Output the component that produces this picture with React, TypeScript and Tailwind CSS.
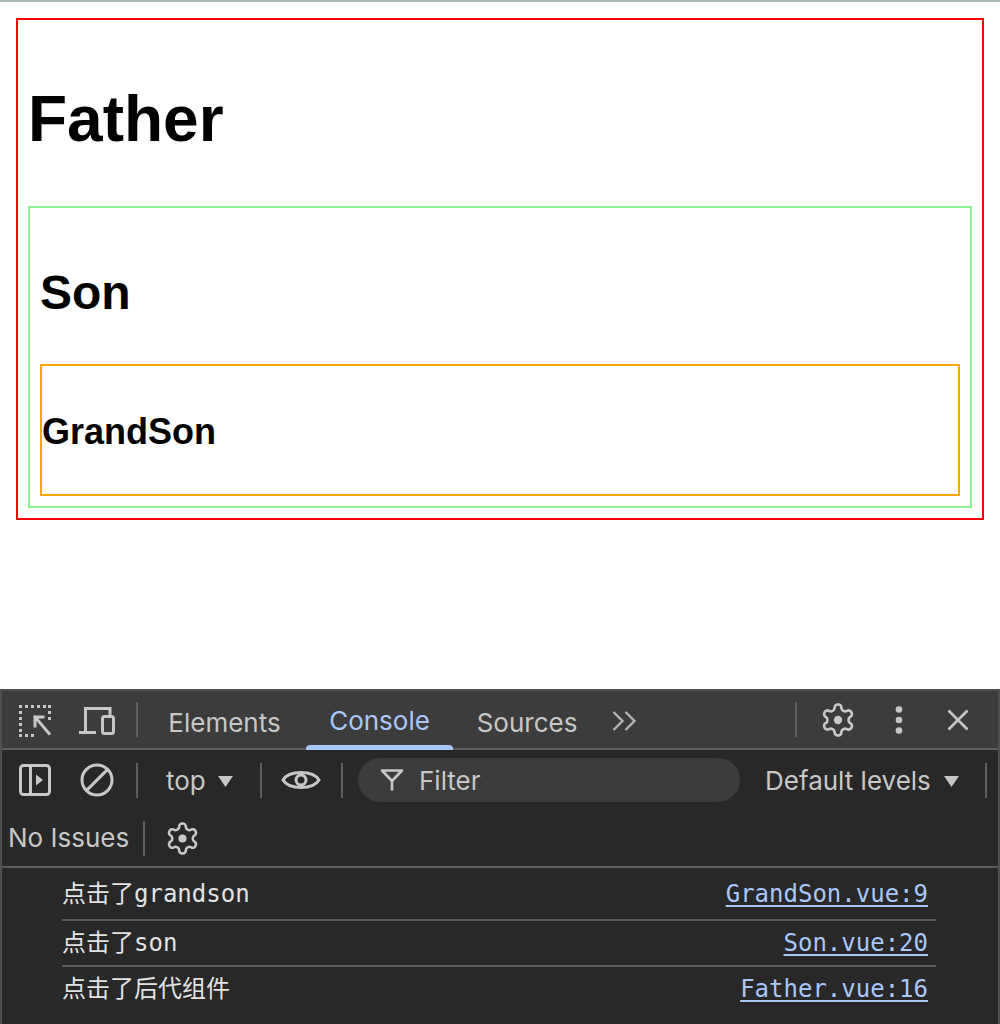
import React from "react";

const ui = "font-['Inter',sans-serif]";
const mono = "font-['DejaVu_Sans_Mono','Noto_Sans_CJK_SC',monospace]";
const C = "#c7c7c7";

function InspectIcon() {
  const dots: [number, number][] = [
    [0, 0], [6, 0], [12, 0], [18, 0], [24, 0], [29, 0],
    [0, 6], [0, 12], [0, 18], [0, 24], [0, 29],
    [29, 6], [29, 12],
    [6, 29], [12, 29],
  ];
  return (
    <svg width="32" height="32" viewBox="0 0 32 32">
      {dots.map(([x, y], i) => (
        <rect key={i} x={x} y={y} width="3" height="3" fill={C} />
      ))}
      <path d="M16 12H24M16 12V21M16 12L30 28.5" stroke={C} strokeWidth="3" fill="none" strokeLinecap="square" />
    </svg>
  );
}

function DeviceIcon() {
  return (
    <svg width="36" height="28" viewBox="0 0 36 28" fill="none" stroke={C} strokeWidth="3">
      <path d="M31 8V1.5H6.5V25" />
      <path d="M0 25.5H17" />
      <rect x="23.5" y="9.5" width="11" height="17" rx="2" />
    </svg>
  );
}

function Gear({ size }: { size: number }) {
  return (
    <svg width={size} height={size} viewBox="1 1 22 22" fill="none" stroke={C} strokeWidth="1.7" strokeLinejoin="round">
      <path d="M12.22 2h-.44a2 2 0 0 0-2 2v.18a2 2 0 0 1-1 1.73l-.43.25a2 2 0 0 1-2 0l-.15-.08a2 2 0 0 0-2.73.73l-.22.38a2 2 0 0 0 .73 2.730l.15.1a2 2 0 0 1 1 1.72v.51a2 2 0 0 1-1 1.74l-.15.09a2 2 0 0 0-.73 2.73l.22.38a2 2 0 0 0 2.73.73l.15-.08a2 2 0 0 1 2 0l.43.25a2 2 0 0 1 1 1.73V20a2 2 0 0 0 2 2h.44a2 2 0 0 0 2-2v-.18a2 2 0 0 1 1-1.73l.43-.25a2 2 0 0 1 2 0l.15.08a2 2 0 0 0 2.73-.73l.22-.39a2 2 0 0 0-.73-2.73l-.15-.08a2 2 0 0 1-1-1.74v-.5a2 2 0 0 1 1-1.74l.15-.09a2 2 0 0 0 .73-2.73l-.22-.38a2 2 0 0 0-2.73-.73l-.15.08a2 2 0 0 1-2 0l-.43-.25a2 2 0 0 1-1-1.73V4a2 2 0 0 0-2-2z" />
      <circle cx="12" cy="12" r="2.7" fill={C} stroke="none" />
    </svg>
  );
}

function Kebab() {
  return (
    <svg width="14" height="30" viewBox="0 0 14 30" fill={C}>
      <circle cx="7" cy="4.5" r="3.3" />
      <circle cx="7" cy="15" r="3.3" />
      <circle cx="7" cy="25.5" r="3.3" />
    </svg>
  );
}

function CloseX() {
  return (
    <svg width="22" height="22" viewBox="0 0 22 22" stroke={C} strokeWidth="2.6" fill="none">
      <path d="M1.5 1.5L20.5 20.5M20.5 1.5L1.5 20.5" />
    </svg>
  );
}

function Chevrons() {
  return (
    <svg width="25" height="20" viewBox="0 0 25 20" stroke="#b4b4b4" strokeWidth="2.4" fill="none">
      <path d="M1.5 1L10.5 10L1.5 19M13.5 1L22.5 10L13.5 19" />
    </svg>
  );
}

function SidebarIcon() {
  return (
    <svg width="32" height="32" viewBox="0 0 32 32" fill="none" stroke={C} strokeWidth="3">
      <rect x="1.5" y="1.5" width="29" height="29" rx="3" />
      <path d="M11.5 1.5V30.5" />
      <path d="M17 10.5L24 16L17 21.5Z" fill={C} stroke="none" />
    </svg>
  );
}

function ClearIcon() {
  return (
    <svg width="34" height="34" viewBox="0 0 34 34" fill="none" stroke={C} strokeWidth="3">
      <circle cx="17" cy="17" r="15" />
      <path d="M6.4 27.6L27.6 6.4" />
    </svg>
  );
}

function EyeIcon() {
  return (
    <svg width="40" height="24" viewBox="0 0 40 24" fill="none" stroke={C} strokeWidth="3">
      <path d="M2 12C8 2 32 2 38 12C32 22 8 22 2 12Z" />
      <circle cx="20" cy="12" r="5" />
    </svg>
  );
}

function FunnelIcon() {
  return (
    <svg width="24" height="24" viewBox="0 0 24 24" fill="none" stroke={C} strokeWidth="2.6" strokeLinejoin="round">
      <path d="M2 2.5H22L12 13L2 2.5Z" />
      <path d="M12 13V22.5" />
    </svg>
  );
}

function Tri() {
  return (
    <svg width="15" height="11" viewBox="0 0 15 11">
      <path d="M0 0H15L7.5 11Z" fill={C} />
    </svg>
  );
}

function VSep() {
  return <div className="w-[2px] h-[35px] bg-[#5e5e5e] shrink-0" />;
}

export default function App() {
  const messages = [
    { text: "点击了grandson", src: "GrandSon.vue:9", h: "h-[51px]" },
    { text: "点击了son", src: "Son.vue:20", h: "h-[46px]" },
    { text: "点击了后代组件", src: "Father.vue:16", h: "h-[46px]" },
  ];
  return (
    <div className="w-[1000px] h-[1024px] overflow-hidden flex flex-col bg-white">
      <div className="h-[2px] bg-[#adbbb7] shrink-0" />
      {/* page */}
      <div className="h-[687px] shrink-0 pl-[16px] pt-[16px] font-['Liberation_Sans',Arial,sans-serif] text-black">
        <div className="w-[968px] h-[502px] border-2 border-[#ff0000] p-[10px]">
          <h1 className="text-[64px] font-bold leading-[74px] mt-[52px] mb-[50px] whitespace-nowrap">Father</h1>
          <div className="h-[302px] border-2 border-[#90ee90] p-[10px]">
            <h2 className="text-[48px] font-bold leading-[55px] mt-[47px] mb-[44px] whitespace-nowrap">Son</h2>
            <div className="h-[132px] border-2 border-[#ffa500]">
              <h3 className="text-[36px] font-bold leading-[40px] mt-[46px] whitespace-nowrap">GrandSon</h3>
            </div>
          </div>
        </div>
      </div>
      {/* devtools */}
      <div className={`flex-1 flex flex-col border-t-2 border-x-2 border-[#4f4f4f] bg-[#282828] ${ui} text-[26px] text-[#c7c7c7]`}>
        {/* row 1 */}
        <div className="h-[59px] shrink-0 flex items-center bg-[#3c3c3c] border-b-2 border-[#5e5e5e]">
          <div className="ml-[17px] mt-[2px] flex"><InspectIcon /></div>
          <div className="ml-[28px] mt-[2px] flex"><DeviceIcon /></div>
          <div className="ml-[21px]"><VSep /></div>
          <div className="ml-[5px] flex h-full">
            <div className="w-[163px] flex items-center justify-center leading-none pt-[6px]">Elements</div>
            <div className="w-[147px] flex flex-col">
              <div className="flex-1 flex items-center justify-center leading-none text-[#a8c7fa] pt-[6px]">Console</div>
              <div className="h-[5px] -mb-[2px] rounded-t-[4px] bg-[#a8c7fa]" />
            </div>
            <div className="w-[148px] flex items-center justify-center leading-none pt-[6px]">Sources</div>
          </div>
          <div className="ml-[11px] mt-[3px] flex"><Chevrons /></div>
          <div className="flex-1" />
          <VSep />
          <div className="ml-[24px] flex"><Gear size={34} /></div>
          <div className="ml-[37px] flex"><Kebab /></div>
          <div className="ml-[41px] mr-[29px] flex"><CloseX /></div>
        </div>
        {/* row 2 */}
        <div className="h-[60px] shrink-0 flex items-center">
          <div className="ml-[17px] flex"><SidebarIcon /></div>
          <div className="ml-[29px] flex"><ClearIcon /></div>
          <div className="ml-[22px]"><VSep /></div>
          <div className="ml-[28px] w-[67px] flex items-center justify-between pt-[2px]">
            <span className="leading-none">top</span>
            <Tri />
          </div>
          <div className="ml-[27px]"><VSep /></div>
          <div className="ml-[19px] flex"><EyeIcon /></div>
          <div className="ml-[20px]"><VSep /></div>
          <div className="ml-[15px] w-[382px] h-[44px] rounded-full bg-[#3c3c3c] flex items-center pl-[22px]">
            <FunnelIcon />
            <span className="ml-[15px] leading-none pt-[2px]">Filter</span>
          </div>
          <div className="ml-[25px] w-[194px] flex items-center justify-between pt-[2px]">
            <span className="leading-none whitespace-nowrap">Default levels</span>
            <Tri />
          </div>
          <div className="ml-[26px]"><VSep /></div>
        </div>
        {/* row 3 */}
        <div className="h-[58px] shrink-0 flex items-center border-b-2 border-[#5e5e5e]">
          <span className="ml-[6px] w-[129px] leading-none whitespace-nowrap">No Issues</span>
          <div className="ml-[6px]"><VSep /></div>
          <div className="ml-[21px] flex"><Gear size={33} /></div>
        </div>
        {/* messages */}
        <div className={`ml-[60px] w-[874px] flex flex-col ${mono} text-[24px]`}>
          {messages.map((m, i) => (
            <div
              key={i}
              className={`${m.h} flex items-center justify-between pr-[8px] ${i > 0 ? "border-t-2 border-[#5a5a5a]" : ""}`}
            >
              <span className="text-[#e3e3e3] whitespace-nowrap">{m.text}</span>
              <span className="text-[#a8c7fa] underline underline-offset-[3px] whitespace-nowrap">{m.src}</span>
            </div>
          ))}
        </div>
      </div>
    </div>
  );
}
